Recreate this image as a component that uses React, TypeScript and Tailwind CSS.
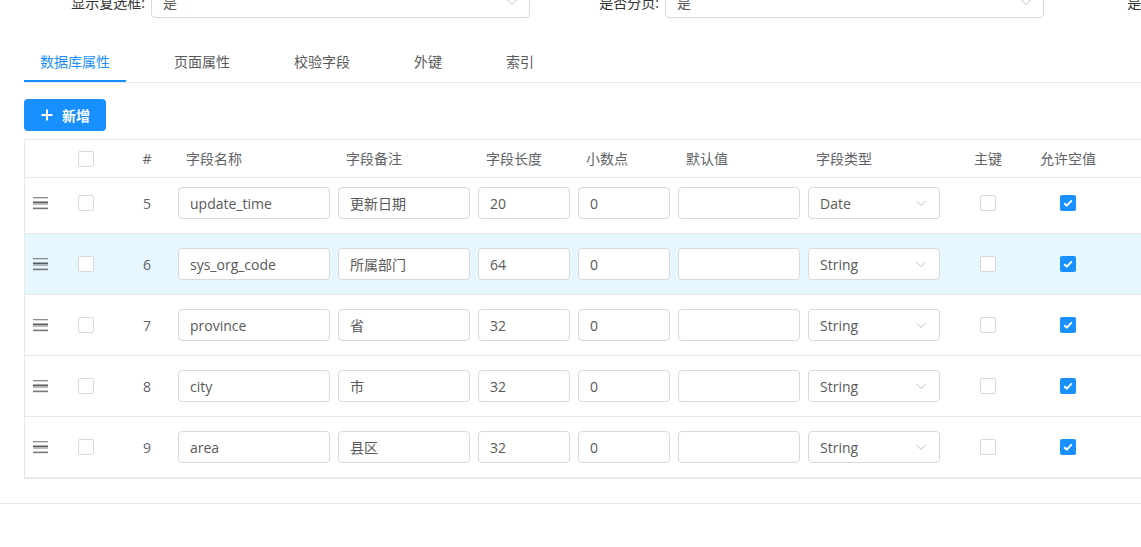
import React from 'react';

type Row = {
  no: number;
  name: string;
  remark: string;
  length: string;
  point: string;
  type: string;
  active?: boolean;
};

const rows: Row[] = [
  { no: 5, name: 'update_time', remark: '更新日期', length: '20', point: '0', type: 'Date' },
  { no: 6, name: 'sys_org_code', remark: '所属部门', length: '64', point: '0', type: 'String', active: true },
  { no: 7, name: 'province', remark: '省', length: '32', point: '0', type: 'String' },
  { no: 8, name: 'city', remark: '市', length: '32', point: '0', type: 'String' },
  { no: 9, name: 'area', remark: '县区', length: '32', point: '0', type: 'String' },
];

const tabs = ['数据库属性', '页面属性', '校验字段', '外键', '索引'];

const Chevron: React.FC = () => (
  <svg width="12" height="12" viewBox="0 0 12 12" fill="none" className="shrink-0">
    <path d="M1.5 4l4.5 4.5L10.5 4" stroke="#bfbfbf" strokeWidth="1" />
  </svg>
);

const DragIcon: React.FC = () => (
  <svg width="15" height="13" viewBox="0 0 15 13">
    <rect x="0" y="0" width="15" height="1.3" fill="#8c8c8c" />
    <rect x="0" y="4.6" width="15" height="1.2" fill="#333" />
    <rect x="0" y="6.4" width="15" height="1.2" fill="#8c8c8c" />
    <rect x="0" y="10.6" width="15" height="1.6" fill="#777" />
  </svg>
);

const Checkbox: React.FC<{ checked?: boolean }> = ({ checked }) =>
  checked ? (
    <span className="flex h-[16px] w-[16px] items-center justify-center rounded-[2px] bg-[#1890ff]">
      <svg width="10" height="8" viewBox="0 0 10 8" fill="none">
        <path d="M1.2 4.2l2.6 2.4L8.8 1.4" stroke="#fff" strokeWidth="2" />
      </svg>
    </span>
  ) : (
    <span className="block h-[16px] w-[16px] rounded-[2px] border border-[#d9d9d9] bg-white" />
  );

const TextBox: React.FC<{ value: string; w: string }> = ({ value, w }) => (
  <div
    className={`${w} flex h-[32px] items-center rounded-[4px] border border-[#d9d9d9] bg-white px-[11px] text-[14px] text-[#595959]`}
  >
    {value}
  </div>
);

const FormItem: React.FC<{ label: string; value: string }> = ({ label, value }) => (
  <div className="flex w-[514px] shrink-0 items-center">
    <div className="w-[135px] shrink-0 pr-[6px] text-right text-[14px] text-[#333]">{label}</div>
    <div className="flex h-[32px] w-[379px] shrink-0 items-center justify-between rounded-[4px] border border-[#d9d9d9] bg-white pl-[11px] pr-[11px] text-[14px] text-[#595959]">
      <span>{value}</span>
      <Chevron />
    </div>
  </div>
);

export default function App() {
  return (
    <div
      className="h-[547px] w-full overflow-hidden bg-white"
      style={{ fontFamily: '"Open Sans", "Noto Sans CJK SC", sans-serif' }}
    >
      {/* form row, partly scrolled out at the top */}
      <div className="-mt-[14px] ml-[16px] flex">
        <FormItem label="显示复选框:" value="是" />
        <FormItem label="是否分页:" value="是" />
        <FormItem label="是否树:" value="否" />
      </div>

      {/* tabs */}
      <div className="ml-[24px] mt-[21px] flex gap-[32px] border-b border-[#e8e8e8]">
        {tabs.map((t, i) => (
          <div
            key={t}
            className={`relative px-[16px] pt-[12px] pb-[9px] text-[14px] leading-[22px] ${
              i === 0 ? 'text-[#1890ff]' : 'text-[#595959]'
            }`}
          >
            {t}
            {i === 0 && <span className="absolute bottom-0 left-0 h-[2px] w-full bg-[#1890ff]" />}
          </div>
        ))}
      </div>

      <div className="px-[24px] pt-[16px] pb-[24px]">
        <button className="flex h-[32px] items-center gap-[8px] rounded-[4px] bg-[#1890ff] pl-[16px] pr-[16px] text-[14px] font-semibold text-white">
          <svg width="14" height="14" viewBox="0 0 14 14" fill="none">
            <path d="M7 1.5v11M1.5 7h11" stroke="#fff" strokeWidth="2" />
          </svg>
          新增
        </button>

        <div className="mt-[8px] w-[1400px] border-t border-b border-l border-[#e8e8e8]">
          {/* header */}
          <div className="flex h-[38px] items-center border-b border-[#e8e8e8] text-[14px] text-[#606266]">
            <div className="w-[45px] shrink-0" />
            <div className="w-[54px] shrink-0 pl-[8px]">
              <Checkbox />
            </div>
            <div className="w-[46px] shrink-0 text-center">#</div>
            <div className="w-[160px] shrink-0 pl-[16px]">字段名称</div>
            <div className="w-[140px] shrink-0 pl-[16px]">字段备注</div>
            <div className="w-[100px] shrink-0 pl-[16px]">字段长度</div>
            <div className="w-[100px] shrink-0 pl-[16px]">小数点</div>
            <div className="w-[130px] shrink-0 pl-[16px]">默认值</div>
            <div className="w-[140px] shrink-0 pl-[16px]">字段类型</div>
            <div className="w-[96px] shrink-0 text-center">主键</div>
            <div className="w-[64px] shrink-0 text-center">允许空值</div>
          </div>

          {/* body, scrolled by a few pixels */}
          <div className="overflow-hidden">
            <div className="-mt-[5px]">
              {rows.map((r) => (
                <div
                  key={r.no}
                  className={`flex h-[61px] items-center border-b border-[#e8e8e8] text-[14px] text-[#606266] ${
                    r.active ? 'bg-[#e6f7ff]' : 'bg-white'
                  }`}
                >
                  <div className="flex w-[45px] shrink-0 pl-[8px]">
                    <DragIcon />
                  </div>
                  <div className="w-[54px] shrink-0 pl-[8px]">
                    <Checkbox />
                  </div>
                  <div className="w-[46px] shrink-0 text-center">{r.no}</div>
                  <div className="w-[160px] shrink-0 pl-[8px]">
                    <TextBox value={r.name} w="w-[152px]" />
                  </div>
                  <div className="w-[140px] shrink-0 pl-[8px]">
                    <TextBox value={r.remark} w="w-[132px]" />
                  </div>
                  <div className="w-[100px] shrink-0 pl-[8px]">
                    <TextBox value={r.length} w="w-[92px]" />
                  </div>
                  <div className="w-[100px] shrink-0 pl-[8px]">
                    <TextBox value={r.point} w="w-[92px]" />
                  </div>
                  <div className="w-[130px] shrink-0 pl-[8px]">
                    <TextBox value="" w="w-[122px]" />
                  </div>
                  <div className="w-[140px] shrink-0 pl-[8px]">
                    <div className="flex h-[32px] w-[132px] items-center justify-between rounded-[4px] border border-[#d9d9d9] bg-white pl-[11px] pr-[12px] text-[14px] text-[#595959]">
                      <span>{r.type}</span>
                      <Chevron />
                    </div>
                  </div>
                  <div className="flex w-[96px] shrink-0 justify-center">
                    <Checkbox />
                  </div>
                  <div className="flex w-[64px] shrink-0 justify-center">
                    <Checkbox checked />
                  </div>
                </div>
              ))}
            </div>
          </div>
        </div>
      </div>

      <div className="border-t border-[#e8e8e8]" />
    </div>
  );
}
